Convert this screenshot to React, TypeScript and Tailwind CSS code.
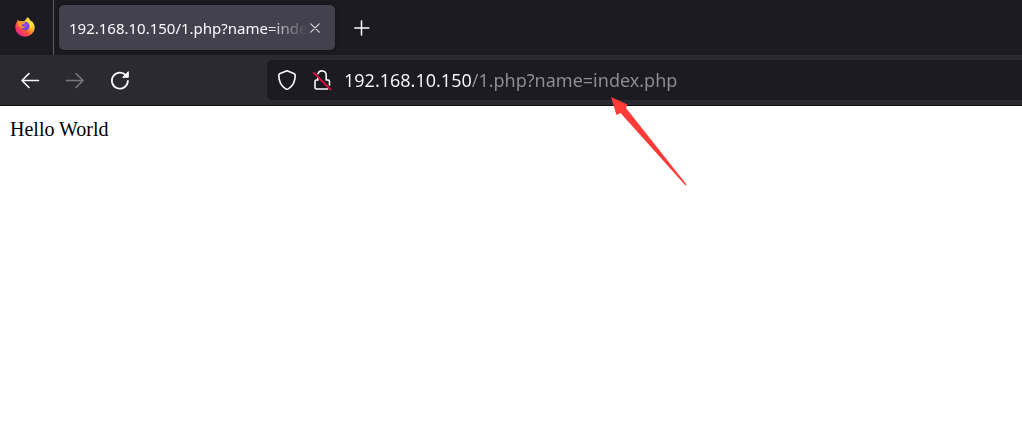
import React from "react";

function FirefoxLogo() {
  return (
    <svg viewBox="0 0 20 20" className="size-5" aria-hidden="true">
      <defs>
        <linearGradient id="flame" x1="0.9" y1="0.1" x2="0.2" y2="0.9">
          <stop offset="0" stopColor="#fff04a" />
          <stop offset="0.35" stopColor="#ffc02e" />
          <stop offset="0.65" stopColor="#ff5a36" />
          <stop offset="1" stopColor="#f5208a" />
        </linearGradient>
        <radialGradient id="globe" cx="0.55" cy="0.4" r="0.6">
          <stop offset="0" stopColor="#9a4dff" />
          <stop offset="1" stopColor="#5b42d6" />
        </radialGradient>
      </defs>
      <path
        d="M12.500 0.200c1.500 1 2.500 2.300 3 3.800l1.700.4c1.600 1.900 2.500 4 2.500 6.100A9.700 9.300 0 0 1 .3 10.500C.2 8.200 1 6 2.300 4.500l.3-1.900c.7.5 1.200 1.200 1.500 1.700C5.300 4 6.400 4 7.500 4.300L9.500 4c.9-1.200 2-2.600 3-3.800z"
        fill="url(#flame)"
      />
      <circle cx="10.200" cy="9" r="4.300" fill="url(#globe)" />
      <path
        d="M2.800 4.900c1.800-.8 4-.6 5.200.3h2.300c-.2 1.200-1.200 1.600-2.300 1.900-.5.700-1.100 1-1.900 1.400.8 1.200 2.300 1.500 4.200.7-.5 2-2.600 2.500-4.800 1.300C3.900 9.900 2.500 7.600 2.800 4.900z"
        fill="#ff9a2b"
      />
      <path
        d="M12.500.8c-1 2-.2 3.200 1.100 4.400 1.700 1.500 1.900 3.800 1 6.400 2-.8 3.600-2.900 3.100-5.900L15.600 4z"
        fill="#ffe03c"
      />
    </svg>
  );
}

function BackIcon() {
  return (
    <svg viewBox="0 0 20 20" className="size-5" fill="none" stroke="currentColor" strokeWidth="1.600" strokeLinecap="round" strokeLinejoin="round" aria-hidden="true">
      <path d="M18.500 10.500H2M9 3.500l-7 7 7 7" />
    </svg>
  );
}

function ForwardIcon() {
  return (
    <svg viewBox="0 0 20 20" className="size-5" fill="none" stroke="currentColor" strokeWidth="1.600" strokeLinecap="round" strokeLinejoin="round" aria-hidden="true">
      <path d="M1.500 10.500H18M11 3.500l7 7-7 7" />
    </svg>
  );
}

function ReloadIcon() {
  return (
    <svg viewBox="0 0 20 20" className="size-5" fill="none" stroke="currentColor" strokeWidth="1.800" strokeLinecap="round" aria-hidden="true">
      <path d="M17.900 11A8 8 0 1 1 15.800 5.200" />
      <path d="M18.300 2v5.300H13z" fill="currentColor" strokeWidth="1" strokeLinejoin="round" />
    </svg>
  );
}

function ShieldIcon() {
  return (
    <svg viewBox="0 0 20 22" className="h-[22px] w-5" fill="none" stroke="currentColor" strokeWidth="1.600" strokeLinejoin="round" aria-hidden="true">
      <path d="M10 1.800l6.900 2.700c.8.300 1.300 1 1.300 1.800 0 6.400-2.400 10.800-6.900 13.600-.8.500-1.800.5-2.600 0C4.200 17.100 1.800 12.700 1.800 6.300c0-.8.500-1.500 1.300-1.800z" />
    </svg>
  );
}

function InsecureIcon() {
  return (
    <svg viewBox="0 0 20 22" className="h-[22px] w-5" fill="none" stroke="currentColor" strokeWidth="1.600" strokeLinecap="round" aria-hidden="true">
      <path d="M6 4.800a4.200 4.200 0 0 1 8.200 1.200v5h1.700c1 0 1.600.6 1.600 1.600v3.500" />
      <path d="M5.800 8.500V11H4.600c-1 0-1.600.6-1.600 1.600v5.800c0 1 .6 1.600 1.600 1.600h11" />
      <path d="M1.800 3.800l16.600 16.600" stroke="#e6103f" strokeWidth="1.800" />
    </svg>
  );
}

export default function App() {
  const [address, setAddress] = React.useState("192.168.10.150/1.php?name=index.php");

  return (
    <div className="relative min-h-screen overflow-hidden bg-white font-['Noto_Sans',sans-serif]">
      <header>
        <div className="flex h-[55px] items-center bg-[#1c1b22] text-[#fbfbfe]">
          <div className="flex w-[54px] items-center justify-center self-stretch border-r border-[#5b5b62] pr-1 pb-[2px]">
            <FirefoxLogo />
          </div>
          <div className="ml-[5px] flex h-[45px] w-[276px] items-center rounded-[5px] bg-[#42414d] pr-3 pl-[10px] shadow-[0_0_4px_rgba(0,0,0,0.4)]">
            <span className="min-w-0 flex-1 overflow-hidden text-[15px] leading-5 whitespace-nowrap [mask-image:linear-gradient(to_left,transparent,black_40px)]">
              192.168.10.150/1.php?name=index.php
            </span>
            <button type="button" aria-label="Close tab" className="flex w-4 justify-center">
              <svg viewBox="0 0 10 10" className="size-[10px]" stroke="#d8d8de" strokeWidth="1.200" strokeLinecap="round" aria-hidden="true">
                <path d="M.8.8l8.400 8.400M9.200.8L.8 9.200" />
              </svg>
            </button>
          </div>
          <button type="button" aria-label="New tab" className="ml-[19px]">
            <svg viewBox="0 0 16 16" className="size-4" stroke="currentColor" strokeWidth="1.500" strokeLinecap="round" aria-hidden="true">
              <path d="M7.500 1v14M.8 8h14" />
            </svg>
          </button>
        </div>

        <div className="flex h-[51px] items-center border-b border-[#0c0c0d] bg-[#2b2a33] text-[#fbfbfe]">
          <nav className="flex w-[267px] shrink-0 gap-[25px] pl-5">
            <button type="button" aria-label="Back">
              <BackIcon />
            </button>
            <button type="button" aria-label="Forward" disabled className="text-[#77767d]">
              <ForwardIcon />
            </button>
            <button type="button" aria-label="Reload">
              <ReloadIcon />
            </button>
          </nav>
          <div className="flex h-10 min-w-0 flex-1 items-center rounded-l-[5px] bg-[#1c1b22] pl-[10px]">
            <button type="button" aria-label="Tracking protection">
              <ShieldIcon />
            </button>
            <button type="button" aria-label="Connection is not secure" className="ml-[15px]">
              <InsecureIcon />
            </button>
            <input
              type="text"
              aria-label="Address"
              value={address}
              onChange={(e) => setAddress(e.target.value)}
              spellCheck={false}
              className="ml-3 h-8 min-w-0 flex-1 bg-[linear-gradient(to_right,#fbfbfe_127px,#8f8f94_127px)] bg-clip-text text-lg text-transparent caret-white outline-none"
            />
          </div>
        </div>
      </header>

      <main className="px-[10px] py-[11px] font-['Liberation_Serif',serif] text-xl leading-6 text-black">
        <p>Hello World</p>
      </main>

      <svg viewBox="0 0 76 90" className="pointer-events-none absolute top-[96px] left-[611px] h-[90px] w-[76px]" aria-hidden="true">
        <path d="M0 1L16.500 8.500 15 12 75.500 88.500 74.500 89.500 9.500 17 5.500 19z" fill="#ff3b38" />
      </svg>
    </div>
  );
}
